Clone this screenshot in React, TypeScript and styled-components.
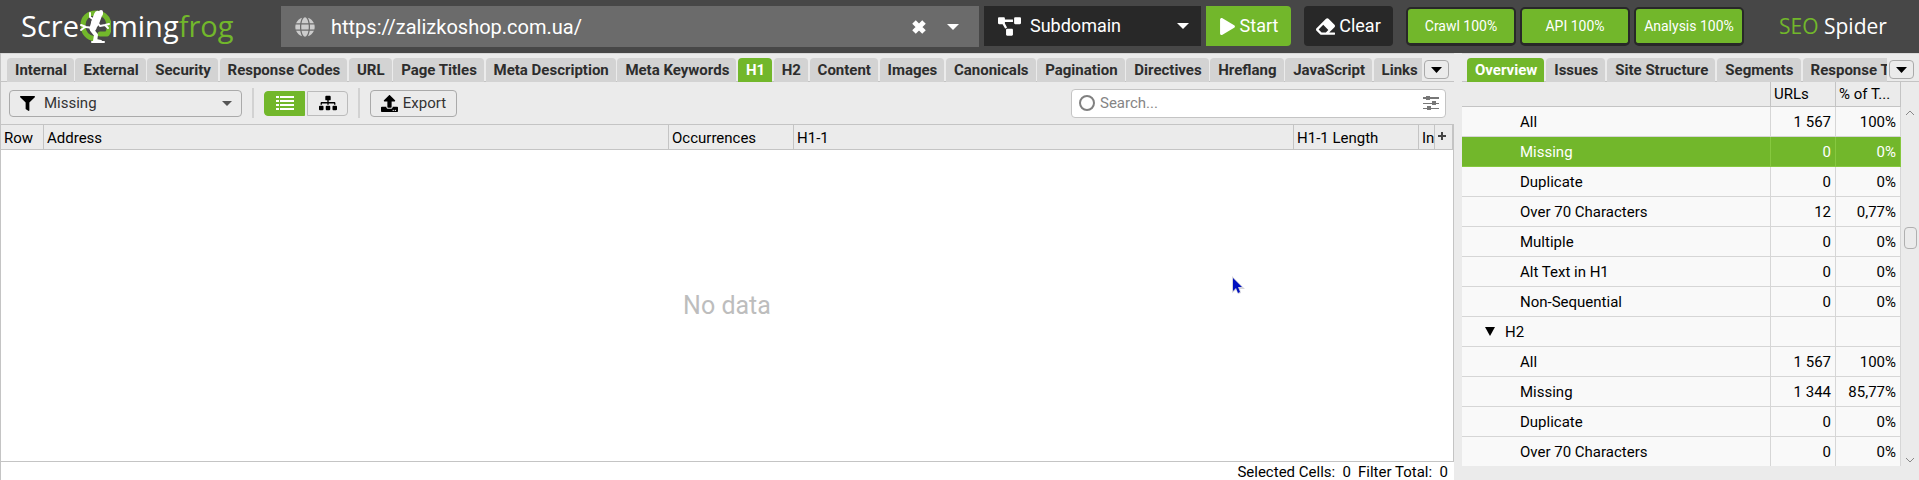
import React from "react";
import styled, { createGlobalStyle, css } from "styled-components";
import {
  FaGlobe,
  FaProjectDiagram,
  FaPlay,
  FaEraser,
  FaFilter,
  FaSitemap,
  FaUpload,
} from "react-icons/fa";

const green = "#72b72b";
const panel = "#ebebeb";
const line = "#c4c4c4";

const GlobalStyle = createGlobalStyle`
  *, *::before, *::after { box-sizing: border-box; }
  body { margin: 0; background: ${panel}; color: #000; font: 15px/20px Roboto, sans-serif; }
  button, input, select { font: inherit; color: inherit; margin: 0; padding: 0; border: 0; background: none; border-radius: 0; outline: 0; }
  svg { display: block; flex: none; }
`;

const Page = styled.div`
  display: flex;
  flex-direction: column;
  height: 100vh;
  min-height: 320px;
  overflow: hidden;
`;

const Header = styled.header`
  display: flex;
  flex: none;
  align-items: flex-start;
  height: 53px;
  padding: 6px 32px 0 21px;
  background: #474747;
  color: #fff;
  font-size: 18px;
`;

const Logo = styled.div`
  display: flex;
  flex: none;
  width: 260px;
  font: 29px/40px "Open Sans", sans-serif;
`;

const Tint = styled.span`
  color: ${green};
`;

const UrlBox = styled.div`
  display: flex;
  flex: 1;
  align-items: center;
  height: 41px;
  padding: 0 20px 0 14px;
  gap: 16px;
  background: #6b6b6b;
`;

const UrlInput = styled.input`
  flex: 1;
  min-width: 0;
  height: 40px;
  font-size: 20px;
`;

const UrlActions = styled.div`
  display: flex;
  gap: 21px;
`;

const IconButton = styled.button`
  display: grid;
  place-items: center;
  height: 22px;
`;

const SelectWrap = styled.label<{ $dark?: boolean }>`
  display: flex;
  flex: none;
  align-items: center;
  ${(p) =>
    p.$dark
      ? css`
          width: 217px;
          height: 40px;
          margin: 0 5px;
          padding: 0 12px 0 14px;
          gap: 9px;
          background: #282828;
        `
      : css`
          width: 233px;
          height: 27px;
          padding: 0 9px 0 10px;
          gap: 9px;
          border: 1px solid #aaa;
          border-radius: 4px;
          color: #333;
        `}
`;

const Select = styled.select`
  appearance: none;
  flex: 1;
  min-width: 0;
  height: 24px;
`;

const HeaderButton = styled.button<{ $green?: boolean }>`
  display: flex;
  flex: none;
  align-items: center;
  justify-content: center;
  gap: 4px;
  width: ${(p) => (p.$green ? 85 : 89)}px;
  height: 40px;
  margin-right: 13px;
  border-radius: ${(p) => (p.$green ? "0 4px 4px 0" : "4px")};
  background: ${(p) => (p.$green ? green : "#282828")};
`;

const Meters = styled.div`
  display: flex;
  flex: none;
  gap: 4px;
  margin: 1px 35px 0 0;
`;

const Meter = styled.div`
  width: 110px;
  height: 39px;
  border: 2px solid #282828;
  border-bottom-width: 3px;
  border-radius: 5px;
  background: ${green};
  font-size: 14px;
  line-height: 34px;
  text-align: center;
`;

const Product = styled.div`
  flex: none;
  width: 108px;
  font: 21px/40px "Open Sans", sans-serif;
  white-space: nowrap;
`;

const Workspace = styled.main`
  display: flex;
  flex: 1;
  min-height: 0;
  gap: 8px;
`;

const Left = styled.section`
  display: flex;
  flex: 1;
  flex-direction: column;
  min-width: 0;
  border-left: 1px solid ${line};
`;

const Right = styled.section`
  display: flex;
  flex: none;
  flex-direction: column;
  width: 457px;
`;

const TabBar = styled.nav<{ $inset: number }>`
  display: flex;
  flex: none;
  align-items: flex-start;
  height: 29px;
  padding: 4px 5px 0 ${(p) => p.$inset}px;
  border-top: 1px solid #d8d8d8;
  border-bottom: 1px solid ${line};
`;

const Tab = styled.button<{ $active?: boolean }>`
  flex: none;
  height: 24px;
  padding: 0 7px 0 8px;
  border-radius: 4px 4px 0 0;
  background: ${(p) => (p.$active ? green : "#d3d3d3")};
  color: ${(p) => (p.$active ? "#fff" : "#2d2d2d")};
  font-weight: 700;
  white-space: nowrap;
`;

const Tabs = styled.div<{ $spread?: boolean }>`
  display: flex;
  flex: 1;
  min-width: 0;
  overflow: hidden;
  ${(p) =>
    p.$spread
      ? css`
          gap: 1px;
          justify-content: space-between;
          ${Tab}:last-child {
            padding-right: 4px;
            border-top-right-radius: 0;
          }
        `
      : css`
          gap: 2px;
        `}
`;

const MoreButton = styled.button`
  display: grid;
  flex: none;
  place-items: center;
  width: 25px;
  height: 19px;
  margin: 2px 0 0 2px;
  border: 1px solid #aaa;
  border-radius: 4px;
`;

const Toolbar = styled.div`
  display: flex;
  flex: none;
  align-items: center;
  height: 42px;
  padding: 0 8px;
`;

const Divider = styled.span`
  width: 2px;
  height: 30px;
  margin: 0 10px;
  background: #d2d2d2;
`;

const ViewSwitch = styled.div`
  display: flex;
  gap: 2px;
`;

const ViewButton = styled.button<{ $active?: boolean }>`
  display: grid;
  place-items: center;
  width: 41px;
  height: 25px;
  border: 1px solid ${(p) => (p.$active ? green : "#bbb")};
  border-radius: ${(p) => (p.$active ? "4px 0 0 4px" : "0 4px 4px 0")};
  background: ${(p) => (p.$active ? green : "transparent")};
`;

const ExportButton = styled.button`
  display: flex;
  align-items: center;
  justify-content: center;
  gap: 5px;
  width: 87px;
  height: 27px;
  border: 1px solid #aaa;
  border-radius: 4px;
  color: #333;
`;

const SearchBox = styled.label`
  display: flex;
  align-items: center;
  gap: 5px;
  width: 375px;
  height: 29px;
  margin-left: auto;
  padding: 0 6px 0 7px;
  border: 1px solid ${line};
  border-radius: 4px;
  background: #fff;
`;

const SearchInput = styled.input`
  flex: 1;
  min-width: 0;
  height: 24px;
  &::placeholder {
    color: #858585;
    opacity: 1;
  }
`;

const GridArea = styled.div`
  display: flex;
  flex: 1;
  flex-direction: column;
  min-height: 0;
  border: 1px solid ${line};
  border-left: 0;
  background: #fff;
`;

const DataTable = styled.table`
  flex: none;
  width: 100%;
  border-collapse: separate;
  border-spacing: 0;
  table-layout: fixed;
  background: ${panel};
`;

const HeadCell = styled.th<{ $w?: number }>`
  width: ${(p) => (p.$w ? `${p.$w}px` : "auto")};
  height: 25px;
  padding: 1px 0 0 3px;
  overflow: hidden;
  border: solid ${line};
  border-width: 0 1px 1px 0;
  font-weight: 400;
  text-align: left;
  white-space: nowrap;
`;

const Empty = styled.div`
  display: grid;
  flex: 1;
  place-items: center;
  color: #bdbdbd;
  font-size: 25px;
`;

const Status = styled.footer`
  display: flex;
  flex: none;
  justify-content: flex-end;
  gap: 7px;
  height: 18px;
  padding-right: 6px;
  background: #fff;
  line-height: 20px;
  white-space: pre;
`;

const Overview = styled.div`
  display: flex;
  flex: 1;
  min-height: 0;
  margin-bottom: 14px;
`;

const TreeScroll = styled.div`
  flex: 1;
  overflow: hidden;
`;

const TreeTable = styled.table`
  width: 100%;
  border-collapse: separate;
  border-spacing: 0;
  table-layout: fixed;
`;

const TreeHead = styled.th<{ $w?: number }>`
  width: ${(p) => (p.$w ? `${p.$w}px` : "auto")};
  height: 25px;
  padding: 0 0 0 3px;
  border: solid ${line};
  border-width: 0 1px 1px 0;
  font-weight: 400;
  text-align: left;
`;

const TreeRow = styled.tr<{ $selected?: boolean }>`
  background: ${(p) => (p.$selected ? green : "#f9f9f9")};
  color: ${(p) => (p.$selected ? "#fff" : "#000")};
  td {
    border-color: ${(p) => (p.$selected ? "#86c83f" : "#d6d6d6")};
  }
`;

const TreeCell = styled.td<{ $indent?: number }>`
  height: 30px;
  padding: 0 4px 0 ${(p) => p.$indent ?? 0}px;
  border: solid;
  border-width: 0 1px 1px 0;
  text-align: ${(p) => (p.$indent ? "left" : "right")};
`;

const Group = styled.span`
  display: flex;
  align-items: center;
  gap: 10px;
`;

const ScrollBar = styled.div`
  display: flex;
  flex: none;
  flex-direction: column;
  align-items: center;
  width: 18px;
  padding: 3px 0;
  border-top: 25px solid ${panel};
`;

const Thumb = styled.span`
  width: 13px;
  height: 22px;
  margin: 111px 0 auto;
  border: 1px solid #b0b0b0;
  border-radius: 4px;
`;

const Pointer = styled.svg`
  position: absolute;
  left: 64%;
  top: 275px;
  margin-left: 3px;
`;

const Caret = ({ w = 11, h = 6, color = "currentColor" }) => (
  <svg width={w} height={h} viewBox="0 0 10 6" preserveAspectRatio="none" fill={color}>
    <path d="M0 0h10L5 6z" />
  </svg>
);

const Chevron = ({ up = false }) => (
  <svg width="10" height="6" viewBox="0 0 10 6" fill="none" stroke="#888">
    <path d={up ? "M1 5l4-4 4 4" : "M1 1l4 4 4-4"} />
  </svg>
);

const CrossIcon = () => (
  <svg width="14" height="14" viewBox="0 0 14 14" fill="none" stroke="#fff" strokeWidth="5">
    <path d="M2 2l10 10M12 2L2 12" />
  </svg>
);

const PlusIcon = () => (
  <svg width="8" height="12" viewBox="0 0 8 12" fill="none" stroke="#444" strokeWidth="2">
    <path d="M4 0v8M0 4h8" />
  </svg>
);

const Frog = () => (
  <svg width="32" height="40" viewBox="0 0 32 40" fill="none" strokeLinecap="round" strokeLinejoin="round">
    <path
      d="M21 28h7c2-3 3-6 2-10C29 10 23 7 17 7 9 7 4 12 4 19c0 8 5 13 12 14"
      stroke={green}
      strokeWidth="5"
    />
    <g stroke="#fff">
      <path d="M19 9l-3 8" strokeWidth="8" />
      <path d="M16 16l-2 6" strokeWidth="7" />
      <path d="M15 14L11 11 11 7M14 22l-7-1-5-2M6 21l-4 3" strokeWidth="2" />
      <path d="M18 16l3 4 5-1 4-1M26 19l3 3" strokeWidth="2" />
      <path d="M13 24l4 5-1 6" strokeWidth="4" />
      <path d="M13 36h12M17 34l5 1" strokeWidth="2" />
      <path d="M22 6v2" strokeWidth="4" />
    </g>
  </svg>
);

const ListIcon = () => (
  <svg width="18" height="14" viewBox="0 0 18 14" fill="#fff">
    <path d="M0 0h3v2H0zM4 0h14v2H4zM0 4h3v2H0zM4 4h14v2H4zM0 8h3v2H0zM4 8h14v2H4zM0 12h3v2H0zM4 12h14v2H4z" />
  </svg>
);

const SlidersIcon = () => (
  <svg width="16" height="14" viewBox="0 0 16 14" fill="#777">
    <path d="M0 1h16v2H0zM0 7h16v1H0zM0 12h16v1H0zM3 0h4v4H3zM9 5h4v4H9zM4 10h4v4H4z" />
  </svg>
);

const mainTabs = [
  "Internal", "External", "Security", "Response Codes", "URL", "Page Titles",
  "Meta Description", "Meta Keywords", "H1", "H2", "Content", "Images", "Canonicals",
  "Pagination", "Directives", "Hreflang", "JavaScript", "Links",
];
const sideTabs = ["Overview", "Issues", "Site Structure", "Segments", "Response Times"];

type Row = { name: string; urls?: string; share?: string; group?: boolean; selected?: boolean };
const rows: Row[] = [
  { name: "All", urls: "1 567", share: "100%" },
  { name: "Missing", urls: "0", share: "0%", selected: true },
  { name: "Duplicate", urls: "0", share: "0%" },
  { name: "Over 70 Characters", urls: "12", share: "0,77%" },
  { name: "Multiple", urls: "0", share: "0%" },
  { name: "Alt Text in H1", urls: "0", share: "0%" },
  { name: "Non-Sequential", urls: "0", share: "0%" },
  { name: "H2", group: true },
  { name: "All", urls: "1 567", share: "100%" },
  { name: "Missing", urls: "1 344", share: "85,77%" },
  { name: "Duplicate", urls: "0", share: "0%" },
  { name: "Over 70 Characters", urls: "0", share: "0%" },
];

export default function App() {
  return (
    <Page>
      <GlobalStyle />
      <Header>
        <Logo>
          Scre
          <Frog />
          ming<Tint>frog</Tint>
        </Logo>
        <UrlBox>
          <FaGlobe size={20} color="#ccc" />
          <UrlInput aria-label="URL to spider" defaultValue="https://zalizkoshop.com.ua/" />
          <UrlActions>
            <IconButton aria-label="Clear URL"><CrossIcon /></IconButton>
            <IconButton aria-label="Recent URLs"><Caret w={12} /></IconButton>
          </UrlActions>
        </UrlBox>
        <SelectWrap $dark>
          <FaProjectDiagram size={23} />
          <Select aria-label="Crawl mode"><option>Subdomain</option></Select>
          <Caret w={12} />
        </SelectWrap>
        <HeaderButton $green><FaPlay size={17} />Start</HeaderButton>
        <HeaderButton><FaEraser size={19} />Clear</HeaderButton>
        <Meters>
          <Meter>Crawl 100%</Meter>
          <Meter>API 100%</Meter>
          <Meter>Analysis 100%</Meter>
        </Meters>
        <Product><Tint>SEO</Tint> Spider</Product>
      </Header>
      <Workspace>
        <Left>
          <TabBar $inset={6}>
            <Tabs $spread>
              {mainTabs.map((t) => <Tab key={t} $active={t === "H1"}>{t}</Tab>)}
            </Tabs>
            <MoreButton aria-label="More tabs"><Caret /></MoreButton>
          </TabBar>
          <Toolbar>
            <SelectWrap>
              <FaFilter size={15} color="#000" />
              <Select aria-label="Filter"><option>Missing</option></Select>
              <Caret w={10} h={5} color="#555" />
            </SelectWrap>
            <Divider />
            <ViewSwitch>
              <ViewButton $active aria-label="List view"><ListIcon /></ViewButton>
              <ViewButton aria-label="Tree view"><FaSitemap size={18} color="#000" /></ViewButton>
            </ViewSwitch>
            <Divider />
            <ExportButton><FaUpload size={17} color="#000" />Export</ExportButton>
            <SearchBox>
              <svg width="16" height="16" viewBox="0 0 16 16" fill="none" stroke="#808080" strokeWidth="2">
                <circle cx="8" cy="8" r="7" />
              </svg>
              <SearchInput aria-label="Search" placeholder="Search..." />
              <SlidersIcon />
            </SearchBox>
          </Toolbar>
          <GridArea>
            <DataTable>
              <thead>
                <tr>
                  <HeadCell $w={43}>Row</HeadCell>
                  <HeadCell>Address</HeadCell>
                  <HeadCell $w={125}>Occurrences</HeadCell>
                  <HeadCell $w={500}>H1-1</HeadCell>
                  <HeadCell $w={125}>H1-1 Length</HeadCell>
                  <HeadCell $w={16}>In</HeadCell>
                  <HeadCell $w={18}>
                    <IconButton aria-label="Add column"><PlusIcon /></IconButton>
                  </HeadCell>
                </tr>
              </thead>
            </DataTable>
            <Empty>No data</Empty>
          </GridArea>
          <Status>
            <span>Selected Cells:  0</span>
            <span>Filter Total:  0</span>
          </Status>
        </Left>
        <Right>
          <TabBar $inset={5}>
            <Tabs>
              {sideTabs.map((t) => <Tab key={t} $active={t === "Overview"}>{t}</Tab>)}
            </Tabs>
            <MoreButton aria-label="More panels"><Caret /></MoreButton>
          </TabBar>
          <Overview>
            <TreeScroll>
              <TreeTable>
                <thead>
                  <tr>
                    <TreeHead aria-label="Name" />
                    <TreeHead $w={65}>URLs</TreeHead>
                    <TreeHead $w={65}>% of T...</TreeHead>
                  </tr>
                </thead>
                <tbody>
                  {rows.map((r, i) => (
                    <TreeRow key={i} $selected={r.selected}>
                      <TreeCell $indent={r.group ? 23 : 58}>
                        {r.group ? <Group><Caret w={10} h={9} />{r.name}</Group> : r.name}
                      </TreeCell>
                      <TreeCell>{r.urls}</TreeCell>
                      <TreeCell>{r.share}</TreeCell>
                    </TreeRow>
                  ))}
                </tbody>
              </TreeTable>
            </TreeScroll>
            <ScrollBar>
              <Chevron up />
              <Thumb />
              <Chevron />
            </ScrollBar>
          </Overview>
        </Right>
      </Workspace>
      <Pointer width="14" height="19" viewBox="0 0 14 19">
        <path d="M1 1v17l4-3 2 4 3-1-1-4h5z" fill="#d4d4dc" />
        <path d="M2 3v13l3-3 2 5 2-1-2-5h4z" fill="#0010c0" />
      </Pointer>
    </Page>
  );
}
